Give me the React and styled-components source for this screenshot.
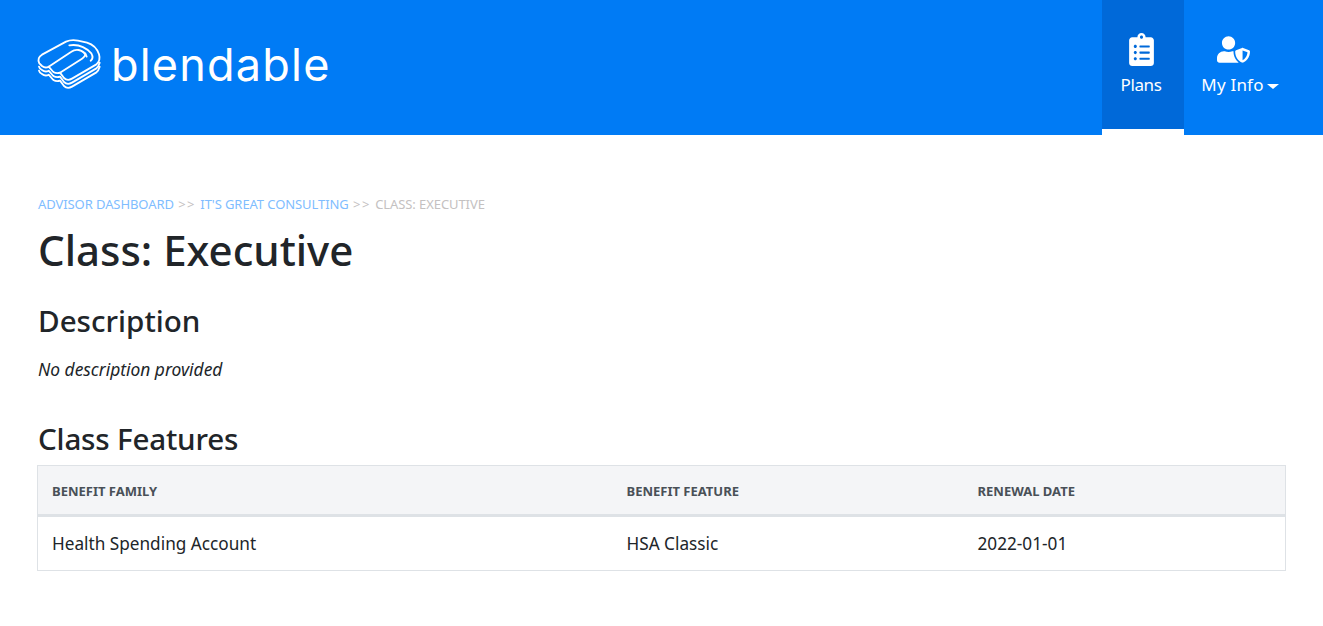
import React from "react";
import styled, { createGlobalStyle } from "styled-components";
import { FaClipboardList, FaUserShield } from "react-icons/fa";

const GlobalStyle = createGlobalStyle`
  html, body {
    margin: 0;
    padding: 0;
    background: #fff;
    color: #212529;
    font-family: "Noto Sans", "Open Sans", sans-serif;
  }
  * {
    box-sizing: border-box;
  }
`;

const Header = styled.header`
  height: 135px;
  background: #007bf5;
  display: flex;
  justify-content: space-between;
  align-items: stretch;
  padding: 0 27px 0 32px;
`;

const Brand = styled.a`
  display: flex;
  align-items: center;
  gap: 3px;
  color: #fff;
  text-decoration: none;
`;

const LogoSvg = styled.svg`
  margin-top: -3px;
`;

const BrandName = styled.span`
  font-family: Inter, "Liberation Sans", sans-serif;
  font-size: 45px;
  font-weight: 400;
  line-height: 1;
  letter-spacing: 1.2px;
  margin-top: -7px;
`;

const Nav = styled.nav`
  display: flex;
  align-items: stretch;
`;

const NavItem = styled.a`
  display: flex;
  flex-direction: column;
  align-items: center;
  width: ${(p) => p.$width}px;
  padding-top: 32px;
  padding-right: ${(p) => (p.$active ? 4 : 0)}px;
  color: #fff;
  font-size: 17px;
  text-decoration: none;
  background: ${(p) => (p.$active ? "#0069d9" : "transparent")};
  border-bottom: 6px solid ${(p) => (p.$active ? "#fff" : "transparent")};
`;

const IconSlot = styled.span`
  display: flex;
  align-items: center;
  justify-content: center;
  height: 34px;
  margin: 0 ${(p) => p.$shift || 0}px 7px 0;
  font-size: 33px;
`;

const NavLabel = styled.span`
  display: flex;
  align-items: center;
  line-height: 24px;
  letter-spacing: ${(p) => p.$spacing}px;
`;

const Caret = styled.span`
  display: inline-block;
  margin-left: 3px;
  margin-top: 3px;
  border-top: 5px solid #fff;
  border-left: 6px solid transparent;
  border-right: 6px solid transparent;
`;

const Main = styled.main`
  padding: 60px 37px 0 38px;
`;

const Breadcrumbs = styled.div`
  font-size: 13px;
  line-height: 18px;
  letter-spacing: -0.08px;
  color: #c4c1c1;
  text-transform: uppercase;
`;

const Crumb = styled.a`
  color: #80bdff;
  text-decoration: none;
`;

const Separator = styled.span`
  margin: 0 1px;
  letter-spacing: 1.5px;
`;

const Title = styled.h1`
  margin: 12px 0 0;
  font-size: 42px;
  font-weight: 500;
  line-height: 50px;
`;

const SectionTitle = styled.h2`
  margin: ${(p) => p.$top}px 0 0;
  font-size: 29.6px;
  font-weight: 500;
  line-height: 38px;
  letter-spacing: ${(p) => p.$spacing || 0}px;
`;

const Description = styled.p`
  margin: 17px 0 0;
  font-size: 17.4px;
  font-style: italic;
  line-height: 24px;
`;

const Table = styled.table`
  margin: 7px 0 0 -1px;
  width: calc(100% + 1px);
  border-collapse: collapse;
  table-layout: fixed;
  border: 1px solid #dee2e6;
`;

const HeadCell = styled.th`
  width: ${(p) => p.$width}px;
  height: 50px;
  padding: 1px 14px 0;
  background: #f4f5f7;
  border-bottom: 3px solid #dee2e6;
  color: #495057;
  font-size: 13px;
  font-weight: 700;
  text-align: left;
  text-transform: uppercase;
`;

const Cell = styled.td`
  height: 55px;
  padding: 0 14px 1px;
  font-size: 17.2px;
`;

function LogoMark() {
  // the pad edge repeats below the top layer for the stacked look
  const edge = "M21 80Q22 86 30 90Q40 98 50 92L64 108Q74 114 84 110L96 126Q106 136 120 128L192 86Q200 80 203 68";
  return (
    <LogoSvg width="76" height="60" viewBox="0 0 228 180" fill="none" stroke="#fff" strokeWidth="5.5" strokeLinejoin="round" strokeLinecap="round">
      <path d="M30 56L102 17Q118 10 138 14L165 20Q192 28 201 55Q207 75 192 86L120 128Q106 136 96 126L84 110Q74 114 64 108L50 92Q40 98 30 90L22 82Q14 66 30 56Z" />
      <path d="M50 92L118 47Q128 40 140 42Q158 46 164 62" />
      <path d="M84 110L150 68Q162 60 160 52" />
      <path d="M112 28Q150 22 178 52Q186 66 176 74" />
      <path d={edge} transform="translate(0 12)" />
      <path d={edge} transform="translate(0 24)" />
    </LogoSvg>
  );
}

export default function App() {
  return (
    <>
      <GlobalStyle />
      <Header>
        <Brand href="#">
          <LogoMark />
          <BrandName>blendable</BrandName>
        </Brand>
        <Nav>
          <NavItem href="#" $active $width={82}>
            <IconSlot><FaClipboardList /></IconSlot>
            <NavLabel $spacing={-0.4}>Plans</NavLabel>
          </NavItem>
          <NavItem href="#" $width={112}>
            <IconSlot $shift={14}><FaUserShield /></IconSlot>
            <NavLabel $spacing={0.2}>My Info<Caret /></NavLabel>
          </NavItem>
        </Nav>
      </Header>
      <Main>
        <Breadcrumbs>
          <Crumb href="#">Advisor Dashboard</Crumb> <Separator>{">>"}</Separator> <Crumb href="#">It's Great Consulting</Crumb> <Separator>{">>"}</Separator> Class: Executive
        </Breadcrumbs>
        <Title>Class: Executive</Title>
        <SectionTitle $top={27}>Description</SectionTitle>
        <Description>No description provided</Description>
        <SectionTitle $top={39} $spacing={-0.2}>Class Features</SectionTitle>
        <Table>
          <thead>
            <tr>
              <HeadCell $width={575}>Benefit Family</HeadCell>
              <HeadCell $width={351}>Benefit Feature</HeadCell>
              <HeadCell>Renewal Date</HeadCell>
            </tr>
          </thead>
          <tbody>
            <tr>
              <Cell>Health Spending Account</Cell>
              <Cell>HSA Classic</Cell>
              <Cell>2022-01-01</Cell>
            </tr>
          </tbody>
        </Table>
      </Main>
    </>
  );
}
